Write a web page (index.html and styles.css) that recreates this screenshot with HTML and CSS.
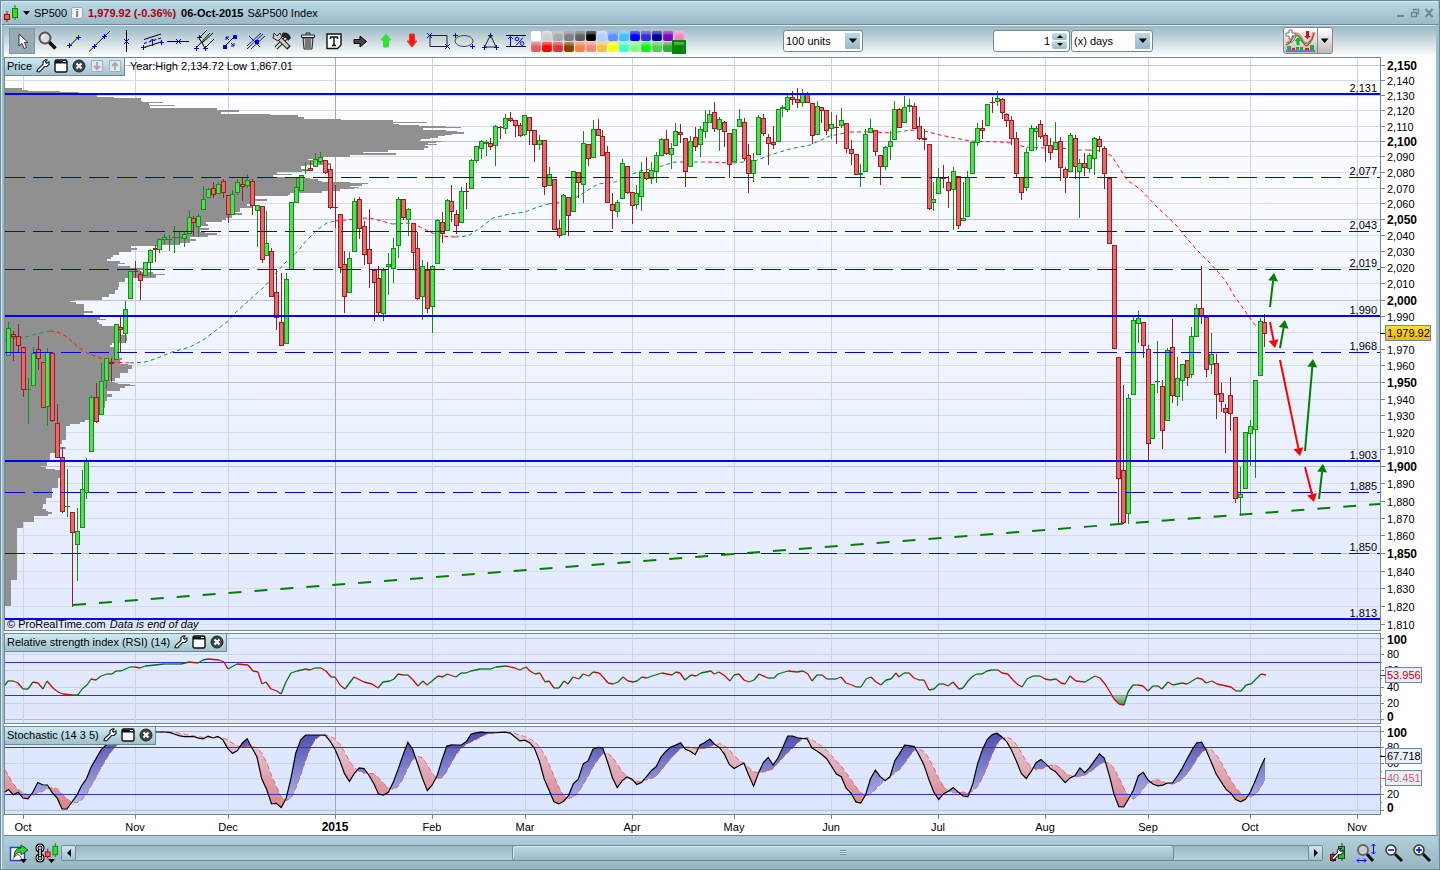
FILE: index.html
```html
<!DOCTYPE html>
<html lang="en">
<head>
<meta charset="UTF-8">
<meta name="viewport" content="width=device-width, initial-scale=1.0">
<title>SP500</title>
<link rel="stylesheet" href="styles.css">
</head>
<body>

<!-- shared icons -->
<svg class="defs" width="0" height="0" aria-hidden="true">
    <defs>
        <symbol id="plus" viewBox="0 0 5 5"><path d="M2.5 0v5M0 2.5h5" stroke="#00f" fill="none"/></symbol>
        <symbol id="cross" viewBox="0 0 5 5"><path d="M0 0l5 5M5 0L0 5" stroke="#00f" fill="none"/></symbol>
        <symbol id="wrench" viewBox="0 0 14 14">
            <path d="M1 12.5L1.5 10.5L7 5.500L7 2.500L9.500 0.800L11 1L9.500 3L10.500 4.200L13 3L13 5.500L11 7.500L8.500 7.500L3.500 12.800Z" fill="#fff" stroke="#222" stroke-width="1.200"/>
        </symbol>
        <symbol id="window" viewBox="0 0 14 14">
            <rect x="1" y="1" width="12" height="12" rx="1.500" fill="#fff" stroke="#111" stroke-width="1.400"/>
            <path d="M1 1.500h12v3H1z" fill="#111"/><path d="M9 2.500h3" stroke="#fff"/>
        </symbol>
        <symbol id="close" viewBox="0 0 14 14">
            <circle cx="7" cy="7" r="6" fill="#444" stroke="#222"/>
            <path d="M4.500 4.500l5 5M9.500 4.500l-5 5" stroke="#fff" stroke-width="2"/>
        </symbol>
        <symbol id="lens" viewBox="0 0 20 20">
            <path d="M11 11l7 7" stroke="#111" stroke-width="3"/>
            <circle cx="7" cy="7" r="5" fill="#eef6fa" stroke="#333" stroke-width="1.500"/>
        </symbol>
        <symbol id="candles" viewBox="0 0 16 18">
            <path d="M4 7v11" stroke="#a00"/><rect x="1.500" y="10.500" width="5" height="5" fill="#f06060" stroke="#a00"/>
            <path d="M12 1v15" stroke="#080"/><rect x="9.500" y="4.500" width="5" height="9" fill="#3d3" stroke="#080"/>
        </symbol>
    </defs>
</svg>

<div class="window">

    <!-- TITLE BAR -->
    <header class="titlebar">
        <svg width="16" height="18"><use href="#candles"/></svg>
        <button class="caret" aria-label="Instrument list"></button>
        <span class="symbol">SP500</span>
        <button class="info" aria-label="Information">i</button>
        <strong class="quote">1,979.92 (-0.36%)</strong>
        <strong class="date">06-Oct-2015</strong>
        <span class="name">S&amp;P500 Index</span>
        <div class="controls">
            <button aria-label="Minimize"><svg width="10" height="10"><path d="M1 8h7" stroke="#6b8594" stroke-width="2"/></svg></button>
            <button aria-label="Restore"><svg width="10" height="10"><path d="M3.500 3V1.500h5v4H7M1.500 4.500h5v4h-5z" fill="none" stroke="#6b8594" stroke-width="1.300"/></svg></button>
            <button aria-label="Close"><svg width="10" height="10"><path d="M1.500 1l7 8M8.500 1l-7 8" stroke="#6b8594" stroke-width="2"/></svg></button>
        </div>
    </header>

    <!-- TOOLBAR -->
    <div class="toolbar">
        <div class="tools">
            <button class="tool active" aria-label="Pointer"><svg viewBox="0 0 26 25"><path d="M10 6v12l3-2.500l2 5l2.500-1l-2-5h3.500z" fill="#fff" stroke="#333"/></svg></button>
            <button class="tool" aria-label="Zoom"><svg viewBox="0 0 26 25"><path d="M14 14l6.500 6.500" stroke="#111" stroke-width="3.500"/><circle cx="10" cy="10" r="5.500" fill="#ddd" stroke="#555" stroke-width="2"/><path d="M7 10q0-3 3-3" fill="none" stroke="#fff"/></svg></button>
            <button class="tool" aria-label="Segment"><svg viewBox="0 0 26 25"><path d="M9 17.500l8-8" stroke="#000"/><use href="#plus" x="6" y="15" width="5" height="5"/><use href="#plus" x="15" y="7" width="5" height="5"/></svg></button>
            <button class="tool" aria-label="Line"><svg viewBox="0 0 26 25"><path d="M2 23.500L23 3" stroke="#000"/><use href="#plus" x="5" y="16" width="5" height="5"/><use href="#plus" x="15" y="6" width="5" height="5"/></svg></button>
            <button class="tool" aria-label="Vertical line"><svg viewBox="0 0 26 25"><path d="M13.500 2v22" stroke="#000"/><use href="#cross" x="11" y="11" width="5" height="5"/></svg></button>
            <button class="tool" aria-label="Channel"><svg viewBox="0 0 26 25"><path d="M5 11.500L22 6M5 19.500L22 14" stroke="#000"/><path d="M5 15.500L22 10" stroke="#000" stroke-dasharray="3 2"/><path d="M13.500 18v-7M11.500 13l2-2l2 2" fill="none" stroke="#00f"/><use href="#plus" x="2" y="17" width="5" height="5"/><use href="#plus" x="20" y="12" width="5" height="5"/></svg></button>
            <button class="tool" aria-label="Horizontal line"><svg viewBox="0 0 26 25"><path d="M2 13.500h22" stroke="#000"/><use href="#cross" x="11" y="11" width="5" height="5"/></svg></button>
            <button class="tool" aria-label="Pitchfork"><svg viewBox="0 0 26 25"><path d="M8 10l8-8M5 20L19 5M14 20l9-9M8 10l6 10M11 15L22 5" fill="none" stroke="#000"/><use href="#plus" x="6" y="7" width="5" height="5"/><use href="#plus" x="3" y="18" width="5" height="5"/><use href="#plus" x="12" y="18" width="5" height="5"/></svg></button>
            <button class="tool" aria-label="Duplicate segment"><svg viewBox="0 0 26 25"><path d="M8 18l10-10" stroke="#000"/><path d="M6 17h4v4h-4zM16 7h4v4h-4z" fill="#00f"/><path d="M9 9l3 3M9 12V9h3M17 18l-3-3M17 15v3h-3" fill="none" stroke="#00f"/></svg></button>
            <button class="tool" aria-label="Parallel line"><svg viewBox="0 0 26 25"><path d="M4 18L18 5M8 21L22 8" stroke="#222"/><path d="M6 8l11 11M4 21L20 6" stroke="#00f"/><path d="M12 12h4v4h-4z" fill="#00f"/></svg></button>
            <button class="tool" aria-label="Object tools"><svg viewBox="0 0 26 25"><path d="M7 20L20 7" stroke="#222" stroke-width="4"/><path d="M7 20L18 9" stroke="#ddd" stroke-width="2"/><path d="M10 10l10 10" stroke="#222" stroke-width="5"/><path d="M10 10l9 9" stroke="#ccc" stroke-width="3"/><path d="M13 5q6-2 9 5l-3 3q-1-4-6-4z" fill="#222"/><path d="M5 5l3 3l3-3l2 4l-4 4l-5-3z" fill="#ccc" stroke="#222"/></svg></button>
            <button class="tool" aria-label="Delete"><svg viewBox="0 0 26 25"><path d="M8 10l1 11h8l1-11z" fill="#ccc" stroke="#222"/><path d="M6.500 7h13v2.500h-13z" fill="#eee" stroke="#222"/><path d="M11 6.500v-1.500h4v1.500M11 11v9M13 11v9M15 11v9" fill="none" stroke="#222"/></svg></button>
            <button class="tool" aria-label="Text"><svg viewBox="0 0 26 25"><path d="M6 6h14v11l-3.500 3.500H6z" fill="#fff" stroke="#111" stroke-width="1.400"/><path d="M9.500 11V9h7v2M13 9v8.500M11 17.500h4" fill="none" stroke="#111" stroke-width="1.500"/></svg></button>
            <button class="tool" aria-label="Arrow right"><svg viewBox="0 0 26 25"><path d="M7 11.500h6V8l6.500 5.500L13 19v-3.500H7z" fill="#444" stroke="#000"/></svg></button>
            <button class="tool" aria-label="Arrow up"><svg viewBox="0 0 26 25"><path d="M13 6l5 6h-2.500v7h-5v-7H8z" fill="#2e2" stroke="#5c5"/></svg></button>
            <button class="tool" aria-label="Arrow down"><svg viewBox="0 0 26 25"><path d="M13 19l5-6h-2.500V6h-5v7H8z" fill="#f11" stroke="#e33"/></svg></button>
            <button class="tool" aria-label="Rectangle"><svg viewBox="0 0 26 25"><path d="M5 7.500h17v11H5z" fill="none" stroke="#222"/><use href="#cross" x="2" y="5" width="5" height="5"/><use href="#cross" x="20" y="16" width="5" height="5"/></svg></button>
            <button class="tool" aria-label="Ellipse"><svg viewBox="0 0 26 25"><ellipse cx="13" cy="13" rx="9" ry="5.500" fill="none" stroke="#444"/><use href="#plus" x="2" y="5" width="5" height="5"/><use href="#plus" x="19" y="16" width="5" height="5"/></svg></button>
            <button class="tool" aria-label="Triangle"><svg viewBox="0 0 26 25"><path d="M13.500 7L19 19H7.500z" fill="none" stroke="#222"/><use href="#plus" x="11" y="5" width="5" height="5"/><use href="#plus" x="5" y="17" width="5" height="5"/><use href="#plus" x="17" y="17" width="5" height="5"/></svg></button>
            <button class="tool" aria-label="Percent"><svg viewBox="0 0 26 25"><path d="M3 7.500h20M3 18.500h20" stroke="#000"/><path d="M7.500 18V9M5 11l2.500-2.500L10 11M13 17.500l7-8" fill="none" stroke="#00f"/><circle cx="14" cy="11" r="1.800" fill="none" stroke="#00f"/><circle cx="19" cy="15.500" r="1.800" fill="none" stroke="#00f"/></svg></button>
        </div>

        <div class="palette" id="palette"></div>

        <div class="drop units">
            <select aria-label="Units"><option>100 units</option></select>
        </div>

        <div class="period">
            <div class="spin">
                <input type="number" value="1" aria-label="Number of days">
                <div class="steps">
                    <button aria-label="Increase"><svg width="6" height="3"><path d="M0 3h6L3 0z"/></svg></button>
                    <button aria-label="Decrease"><svg width="6" height="3"><path d="M0 0h6L3 3z"/></svg></button>
                </div>
            </div>
            <div class="drop days">
                <select aria-label="Period"><option>(x) days</option></select>
            </div>
        </div>

        <div class="indicators">
            <button class="add" aria-label="Add indicator"><svg width="33" height="25" viewBox="0 0 33 25">
                <path d="M2 16q4-1 6-6t5-4q3 1 6 7t5 3q4-3 6-12" fill="none" stroke="#d99" stroke-width="3"/>
                <path d="M2 17q4-1 6-6t5-4q3 1 6 7t5 3q4-3 6-12" fill="none" stroke="#c22"/>
                <path d="M3 14q6 3 9-6q4-2 6 6q5 4 11-4" fill="none" stroke="#2a2"/>
                <path d="M5 2h3v3h3v3H8v3H5V8H2V5h3z" fill="#fff" stroke="#777"/>
                <path d="M12.500 17v-4h-2l3.500-4l3.500 4h-2v4z" fill="#0b2"/>
                <path d="M22 3h3v5h2l-3.500 3L20 8h2z" fill="#d11"/>
                <path d="M3 18h4v4H3zM12 19h3v3h-3zM16 19h3v3h-3zM26 17h4v5h-4z" fill="#1b2"/>
                <path d="M8 20h3v2H8zM21 20h4v2h-4z" fill="#d22"/><path d="M2 23h29" stroke="#22c"/>
            </svg></button>
            <button class="more" aria-label="Indicator list"></button>
        </div>
    </div>

    <!-- CHARTS -->
    <main class="charts">
        <section class="panel">
            <div class="tag">
                <span>Price</span>
                <button aria-label="Settings"><svg width="14" height="14"><use href="#wrench"/></svg></button>
                <button aria-label="Maximize"><svg width="14" height="14"><use href="#window"/></svg></button>
                <button aria-label="Close"><svg width="14" height="14"><use href="#close"/></svg></button>
                <button aria-label="Move down"><svg width="14" height="14"><path d="M1.500 1.500h11v11h-11z" fill="#e0e8ea" stroke="#aab"/><path d="M7 3v6M4 7l3 3l3-3" fill="none" stroke="#aaa" stroke-width="2"/></svg></button>
                <button aria-label="Move up"><svg width="14" height="14"><path d="M1.500 1.500h11v11h-11z" fill="#e0e8ea" stroke="#aab"/><path d="M7 11V5M4 7l3-3l3 3" fill="none" stroke="#aaa" stroke-width="2"/></svg></button>
            </div>
            <p class="range">Year:High 2,134.72 Low 1,867.01</p>
            <p class="credit">© ProRealTime.com <em>Data is end of day</em></p>
            <svg id="price" class="plot price" role="img" aria-label="SP500 price"></svg>
        </section>

        <section class="panel">
            <div class="tag">
                <span>Relative strength index (RSI) (14)</span>
                <button aria-label="Settings"><svg width="14" height="14"><use href="#wrench"/></svg></button>
                <button aria-label="Maximize"><svg width="14" height="14"><use href="#window"/></svg></button>
                <button aria-label="Close"><svg width="14" height="14"><use href="#close"/></svg></button>
            </div>
            <svg id="rsi" class="plot rsi" role="img" aria-label="RSI"></svg>
        </section>

        <section class="panel">
            <div class="tag">
                <span>Stochastic (14 3 5)</span>
                <button aria-label="Settings"><svg width="14" height="14"><use href="#wrench"/></svg></button>
                <button aria-label="Maximize"><svg width="14" height="14"><use href="#window"/></svg></button>
                <button aria-label="Close"><svg width="14" height="14"><use href="#close"/></svg></button>
            </div>
            <svg id="stoch" class="plot stoch" role="img" aria-label="Stochastic"></svg>
        </section>
        <svg id="dates" class="plot dates" role="img" aria-label="Dates"></svg>
    </main>

    <!-- BOTTOM BAR -->
    <footer class="bottombar">
        <button class="ico" aria-label="Export"><svg width="20" height="20" viewBox="0 0 20 20"><path d="M1.500 4.500h14v13h-14z" fill="#fff" stroke="#24c" stroke-width="1.500"/><path d="M4 16q5-9 9 0" fill="none" stroke="#d22"/><path d="M5 14q0-9 7-9V2l7 5l-7 5V9q-5 0-7 5z" fill="#3c4" stroke="#060"/><path d="M11 16h7l-3.500 4z"/></svg></button>
        <button class="ico wide" aria-label="Link charts"><svg width="26" height="20" viewBox="0 0 26 20"><path d="M6 2q-3 0-3 3q0 3 3 3q3 0 3-3q0-3-3-3zM6 12q-3 0-3 3q0 3 3 3q3 0 3-3q0-3-3-3z" fill="none" stroke="#000" stroke-width="3"/><path d="M6 2q-3 0-3 3q0 3 3 3q3 0 3-3q0-3-3-3zM6 12q-3 0-3 3q0 3 3 3q3 0 3-3q0-3-3-3zM6 7v6" fill="none" stroke="#fff"/><path d="M4.500 6v8M7.500 6v8" stroke="#000"/><use href="#candles" x="10" y="-1" width="15" height="17"/><path d="M14 16h7l-3.500 4z"/></svg></button>
        <button class="end" aria-label="Scroll left"><svg width="4" height="8"><path d="M4 0v8L0 4z"/></svg></button>
        <div class="track"><div class="thumb"><i></i></div></div>
        <button class="end" aria-label="Scroll right"><svg width="4" height="8"><path d="M0 0v8l4-4z"/></svg></button>
        <button class="ico first" aria-label="Chart settings"><svg width="20" height="20" viewBox="0 0 20 20"><path d="M14 0v18" stroke="#333"/><rect x="10.500" y="3.500" width="6" height="12" fill="#2b4" stroke="#050"/><path d="M5 9v10" stroke="#333"/><rect x="2.500" y="11.500" width="5" height="6" fill="#d33" stroke="#600"/><use href="#wrench" x="3" y="4" width="13" height="14"/></svg></button>
        <button class="ico zoom" aria-label="Zoom fit"><svg width="20" height="20" viewBox="0 0 20 20"><path d="M10 10l7 8" stroke="#111" stroke-width="3"/><circle cx="7" cy="7" r="5" fill="#ccc" stroke="#666" stroke-width="2"/><path d="M17.500 1v10M15.500 3l2-2l2 2M15.500 9l2 2l2-2M1 17.500h9M3 15.500l-2 2l2 2M8 15.500l2 2l-2 2" fill="none" stroke="#00f"/></svg></button>
        <button class="ico zoom" aria-label="Zoom out"><svg width="20" height="20"><use href="#lens"/><path d="M4 7h6" stroke="#00f" stroke-width="1.500"/></svg></button>
        <button class="ico zoom" aria-label="Zoom in"><svg width="20" height="20"><use href="#lens"/><path d="M4 7h6M7 4v6" stroke="#00f" stroke-width="1.500"/></svg></button>
    </footer>
</div>

<script src="chart.js"></script>
</body>
</html>
```

FILE: styles.css
```css
:root {
    --line: #6f8995;
    --light: #bad9e7;
    --mid: #9dbbc8;
}
* { box-sizing: border-box; }
body {
    margin: 0;
    font-family: "Liberation Sans", Arial, sans-serif;
    font-size: 11px;
    color: #000;
    background: var(--mid);
}
button {
    padding: 0;
    border: none;
    background: none;
    font: inherit;
    color: inherit;
}
p { margin: 0; }
svg { display: block; }
.defs { position: absolute; }
.window {
    min-height: 100vh;
    display: flex;
    flex-direction: column;
    padding: 0 3px;
    border: 1px solid var(--line);
    background: linear-gradient(to right, #d8edf5 1px, var(--mid) 1px);
}

/* title bar */
.titlebar {
    height: 24px;
    margin: 0 -2px;
    padding: 0 4px 0 1px;
    display: flex;
    align-items: center;
    border-top: 1px solid #d4eaf4;
    border-bottom: 1px solid var(--line);
    background: linear-gradient(var(--light), #9bb9c6);
}
.caret {
    width: 7px;
    height: 4px;
    margin: 0 4px;
    background: #000;
    clip-path: polygon(0 0, 100% 0, 50% 100%);
}
.symbol { width: 37px; }
.info {
    width: 12px;
    height: 12px;
    margin-right: 5px;
    border: 1px solid #9ab;
    border-radius: 2px;
    background: #f4f4f4;
    line-height: 10px;
    font-weight: bold;
    color: #667;
}
.quote { color: #a80010; margin-right: 5px; }
.date { margin-right: 4px; }
.controls {
    margin-left: auto;
    display: flex;
    gap: 4px;
}

/* toolbar */
.toolbar {
    height: 32px;
    padding: 0 5px 2px;
    display: flex;
    align-items: center;
    border-top: 1px solid #d4eaf4;
    background: linear-gradient(#9bb7c4, #fff);
}
.tools { display: flex; }
.tool { width: 26px; height: 26px; }
.tool.active {
    background: #96abb5;
    box-shadow: inset 0 0 0 1px #8096a1;
}
.palette {
    margin-left: 2px;
    padding-top: 2px;
    display: grid;
    grid-template-columns: repeat(14, 10px);
    gap: 1px;
}
.palette button {
    height: 10px;
    border-radius: 2px;
    box-shadow: inset 0 3px 2px rgba(255,255,255,0.35);
}
.palette .picked { outline: 2px solid #080; border-radius: 0; }
.drop { position: relative; }
.drop::after {
    content: "";
    position: absolute;
    top: 3px;
    right: 3px;
    width: 15px;
    height: 16px;
    background: #000;
    clip-path: polygon(25% 37%, 80% 37%, 52% 65%);
    pointer-events: none;
}
.drop select {
    width: 100%;
    height: 22px;
    padding: 0 2px;
    appearance: none;
    border: 1px solid var(--line);
    border-radius: 3px;
    font: inherit;
    color: #000;
    background: linear-gradient(var(--light), #9bb9c6) right 2px center / 15px 16px no-repeat #fff;
}
.units { width: 80px; margin-left: 99px; }
.period {
    margin-left: 130px;
    display: flex;
    gap: 1px;
}
.spin {
    width: 77px;
    height: 22px;
    padding: 2px;
    display: flex;
    border: 1px solid var(--line);
    border-radius: 3px;
    background: #fff;
}
.spin input {
    width: 100%;
    min-width: 0;
    padding: 0 2px;
    border: none;
    text-align: right;
    font: inherit;
    appearance: textfield;
}
.spin input::-webkit-inner-spin-button { display: none; }
.steps {
    width: 15px;
    flex: none;
    display: grid;
    gap: 1px;
}
.steps button {
    display: grid;
    place-items: center;
    border-radius: 2px;
    background: linear-gradient(#c4dfea, #9bb9c6);
}
.days { width: 82px; }
.indicators {
    margin-left: 130px;
    display: flex;
    border: 1px solid #888;
    border-radius: 3px;
    background: linear-gradient(#fff, #bbb);
}
.add { border-right: 1px solid #888; }
.more {
    width: 14px;
    background: #000;
    clip-path: polygon(20% 42%, 75% 42%, 47% 60%);
}

/* charts */
.charts {
    display: flex;
    flex-direction: column;
    gap: 2px;
    background: #fff;
}
.panel { position: relative; }
.plot { width: 100%; }
.plot text { font-size: 11px; }
.plot .bold { font-size: 12px; font-weight: bold; }
.price { height: 574px; }
.rsi { height: 91px; }
.stoch { height: 89px; }
.dates { height: 20px; margin-top: -2px; }
.tag {
    position: absolute;
    top: 1px;
    left: 1px;
    height: 18px;
    padding: 0 2px 2px;
    display: flex;
    align-items: center;
    gap: 4px;
    border-right: 1px solid var(--line);
    border-bottom: 1px solid var(--line);
    background: linear-gradient(#cdebf4, #a2c1cd);
}
.range {
    position: absolute;
    top: 3px;
    left: 126px;
}
.credit {
    position: absolute;
    bottom: 1px;
    left: 3px;
    line-height: 12px;
}
.credit em { margin-left: 1px; }
.crisp { shape-rendering: crispEdges; }

/* bottom bar */
.bottombar {
    flex: 1;
    min-height: 34px;
    margin-right: -2px;
    padding: 0 6px 0 5px;
    display: flex;
    align-items: center;
    border-top: 1px solid var(--line);
    background: linear-gradient(#b2d0dc, #98b6c2);
}
.ico { width: 20px; height: 20px; }
.ico.wide { width: 26px; margin: 0 1px 0 5px; }
.ico.first { margin-left: 5px; }
.ico.zoom { margin-left: 8px; }
.end {
    width: 15px;
    height: 16px;
    display: grid;
    place-items: center;
    border: 1px solid var(--line);
    border-radius: 2px;
    background: linear-gradient(#d0e6ef, #a5c3cf);
}
.track {
    flex: 1;
    height: 16px;
    border-top: 1px solid var(--line);
    border-bottom: 1px solid var(--line);
    background: linear-gradient(#98b6c3, #b5d3df);
}
.thumb {
    width: 53.7%;
    height: 16px;
    margin: -1px 0 0 35.4%;
    display: grid;
    place-items: center;
    border: 1px solid var(--line);
    border-radius: 3px;
    background: linear-gradient(#bad9e5, #9bb9c6);
    box-shadow: inset 1px 1px 0 #d8edf5;
}
.thumb i {
    width: 6px;
    height: 5px;
    background: repeating-linear-gradient(#6f8995 0 1px, #d8edf5 1px 2px);
}
```

FILE: chart.js
```javascript
// === PALETTE ===
const colors = [
    '#ffffff', '#d0d0d0', '#a8a8a8', '#808080', '#606060', '#000000', '#b8c8ff', '#6090ff', '#40c0ff', '#0000ff', '#3030d8', '#0000a0', '#8000c0', '#ff80c0',
    '#e06060', '#ff0000', '#e83030', '#884000', '#ff8040', '#ff8870', '#ffc040', '#ffff00', '#40ffc0', '#80ff80', '#00ff00', '#50d050', '#30b030', '#008000'
];
const palette = document.getElementById('palette');
colors.forEach((c, i) => {
    const b = document.createElement('button');
    b.style.background = c;
    b.setAttribute('aria-label', 'Colour ' + c);
    if (i === colors.length - 1) b.className = 'picked';
    palette.appendChild(b);
});

// === DATA ===
// colour, body top, body bottom, high, low
const candles = `
g328,355,322,355 r334,336,331,360 r336,345,324,352 r347,389,347,396 g389,389,378,423 g353,385,347,385 r349,358,336,369 r362,407,362,407
g352,406,348,425 r353,420,353,421 r423,457,404,457 r457,511,447,512 g506,506,469,516 r512,532,512,606 g531,544,508,580 g489,527,470,527
g461,492,458,498 g397,451,395,451 r397,421,383,422 g381,414,363,414 g358,380,358,388 r362,363,358,381 g324,359,324,359 r327,329,315,352
g309,333,301,342 g271,298,271,298 r271,271,261,277 r274,280,271,299 g262,275,262,275 g250,262,249,275 r248,249,245,261 g239,249,238,252
g237,239,234,243 g239,239,235,250 g237,237,226,252 g237,237,232,243 g234,238,232,246 g217,233,210,233 r218,222,216,235 g216,226,214,236
g199,209,186,209 g189,197,188,197 r188,194,182,197 g184,193,182,193 r181,192,179,197 r195,214,195,222 g194,214,190,214 g182,192,179,194
r184,186,178,200 g180,185,174,187 r181,205,179,214 g205,210,205,246 r206,259,206,262 g243,255,211,255 r251,296,248,296 r292,317,269,329
r322,345,273,345 g279,343,273,343 g202,269,202,269 g187,202,177,202 g175,190,175,190 g170,170,162,173 r168,170,161,170 g159,166,153,166
g157,161,152,163 r160,172,160,173 r169,207,165,208 r207,207,185,227 r214,267,214,272 r264,296,251,312 g258,292,252,292 g201,251,198,251
r199,228,197,238 r226,254,221,264 r249,263,209,287 r270,282,270,320 r278,312,266,315 g270,313,268,320 g264,266,253,294 g248,268,238,282
g199,245,197,257 r199,217,199,219 g209,219,208,235 r223,252,223,269 r248,298,232,299 g266,296,260,319 r270,308,262,312 g266,306,265,332
g220,263,219,263 r222,233,212,242 g200,230,199,230 r201,211,185,221 r214,225,210,233 g191,222,187,222 r191,191,183,208 g160,188,159,188
g146,160,146,162 g141,148,140,158 g142,143,140,155 r143,146,138,149 g126,145,125,165 r127,127,126,138 g118,128,114,133 r118,120,112,121
r120,125,120,136 r125,135,123,136 g115,134,115,135 r117,130,117,144 r130,144,130,161 g140,144,135,149 r140,186,140,194 g174,185,167,185
r179,229,179,229 r228,235,220,237 g195,234,194,234 r197,215,197,235 g171,211,171,211 r172,182,172,197 g143,184,131,202 r144,158,144,165
g129,157,120,157 r129,135,119,135 r136,155,130,155 r152,202,146,202 r204,210,193,228 g202,211,200,216 g163,198,159,198 r166,192,166,193
r192,205,192,223 g193,204,185,208 g172,196,162,210 r172,178,157,179 g170,178,162,183 g155,171,152,182 g139,155,138,155 r139,153,130,154
g148,154,143,168 g131,145,123,145 r132,134,124,142 r138,171,138,186 g141,166,136,166 r137,146,127,150 g129,144,126,156 g122,131,110,137
g114,122,110,122 r112,128,102,131 g119,129,117,150 r122,131,121,146 r133,164,133,177 g129,161,129,161 g119,126,109,126 r122,158,118,160
r155,173,144,192 g160,173,153,181 g117,154,115,154 r118,133,114,135 r137,143,134,164 r142,144,126,148 g109,141,109,141 g107,108,105,116
g97,109,94,111 r97,99,91,104 r99,102,88,107 g93,102,89,106 r94,102,92,102 r103,135,103,143 g106,134,101,134 r107,110,107,122
r110,130,110,134 g124,128,112,138 r127,127,115,143 g120,125,108,127 r123,148,123,152 r149,153,140,164 r154,174,154,174 g173,174,164,186
g134,171,129,171 g128,132,119,132 r130,151,130,155 r155,166,155,184 g147,166,146,169 g141,146,131,159 g109,139,101,139 r109,127,108,127
g107,122,96,122 g105,106,99,111 r106,128,103,128 r126,138,117,139 r138,139,129,149 r144,208,144,209 g199,202,182,210 g177,193,168,193
r177,178,165,187 r182,190,176,207 g171,189,167,229 r176,225,176,228 g218,220,182,220 g177,216,171,216 g142,173,142,173 g128,142,123,145
r128,130,120,138 g104,125,104,125 r102,102,97,112 g98,101,91,105 r99,112,98,118 r114,120,113,126 r120,138,116,144 r138,173,132,176
r177,192,177,199 g152,187,148,190 g128,150,125,150 g128,131,126,149 r124,136,120,138 r135,145,133,161 r145,152,138,159 g142,149,122,149
r141,167,137,180 r169,177,167,192 g135,171,133,171 r138,166,135,178 g163,171,159,217 r163,167,153,175 g155,168,153,172 g138,158,137,174
r139,146,136,151 r148,173,146,188 r178,243,178,243 r245,348,245,348 r357,478,357,524 r470,522,385,523 g398,513,394,523 g320,394,316,394
g318,323,311,342 r322,345,322,357 r349,443,345,460 g384,438,384,438 g381,381,341,392 r386,430,380,448 g350,420,348,420 r347,395,319,402
g378,396,357,405 g364,380,364,400 r360,377,360,385 g336,374,327,377 g308,336,304,336 r308,316,266,323 r317,369,317,376 g354,364,333,373
r363,394,354,418 r393,401,383,411 r408,412,404,452 r395,413,377,430 r417,498,417,502 g494,497,467,515 g432,488,432,488 g426,433,420,465
g380,429,380,477 g321,375,318,375 r322,333,314,346
`.trim().split(/\s+/).map(t => ({ up: t[0] === 'g', v: t.slice(1).split(',').map(Number) }));

const pairs = s => s.trim().split(/\s+/).map(p => p.split(',').map(Number));

// volume profile: y, right edge
const profile = pairs(`88,22 90,28 91,60 92,79 94,97 97,114 98,141 101,142 102,163 103,149 105,175 106,150 108,217 110,239 112,221 114,270
115,298 117,304 119,341 120,393 122,427 123,393 124,399 125,419 126,446 127,461 128,423 130,446 131,457 132,464 134,452 135,445 136,438
138,430 139,421 140,420 141,442 142,436 143,428 144,437 145,425 146,428 148,424 150,388 152,363 153,396 155,350 157,320 159,308 160,326
163,331 165,307 166,301 169,310 171,302 172,277 174,292 175,273 177,290 178,310 179,318 181,322 182,350 183,368 184,362 186,350 187,359
188,354 189,340 191,322 193,290 195,288 196,255 199,267 201,255 204,247 206,252 208,240 212,235 213,242 215,232 218,226 220,222 222,206
224,208 226,200 228,209 230,200 232,205 233,217 235,208 237,190 239,196 241,190 243,180 245,160 246,131 248,137 250,131 252,119 255,113
257,111 259,107 261,120 263,125 264,118 266,130 268,146 270,140 272,153 274,165 275,156 278,125 282,119 287,118 290,115 294,109 297,102
300,75 301,70 302,76 304,84 311,93 313,84 315,95 317,100 319,106 320,97 322,99 324,102 326,120 335,127 341,125 343,112 345,110 347,117
350,115 355,116 358,122 360,120 364,128 365,132 369,128 373,120 378,115 381,110 382,115 383,118 384,130 385,135 386,125 388,120 391,107
394,112 397,107 401,105 408,102 411,104 415,90 417,90 420,85 422,80 424,70 426,66 438,66 440,62 444,60 447,66 449,60 453,50 462,47 466,41
467,46 469,55 470,60 478,58 488,52 498,46 504,43 508,42 509,46 511,48 512,52 514,48 516,34 522,23 528,17 580,11 606,5`);

// moving average, cut where it changes direction
const average = [
    ['g', '5,340 12,338 20,338 30,336 40,333 50,331'],
    ['r', '50,331 58,332 67,337 78,347 87,353 95,356 103,359 112,362 130,363'],
    ['g', '130,363 145,362 155,359 172,352 190,347 203,340 215,331 228,321 234,314 245,304 256,294 265,286 275,274 285,263 297,252 306,241 318,229 327,223 335,221'],
    ['r', '335,221 348,220 360,218 370,218 385,222 392,224'],
    ['g', '392,224 412,223'],
    ['r', '412,223 430,232 440,236 455,237'],
    ['g', '455,237 468,236 480,228 493,218 510,214 525,212 535,208 548,204'],
    ['r', '548,204 562,202'],
    ['g', '562,202 575,198 585,192 598,184 615,182 630,175 640,171 655,168 675,162 680,162'],
    ['r', '680,162 694,162'],
    ['g', '694,162 708,162'],
    ['r', '708,162 733,163'],
    ['g', '733,163 755,161 770,155 790,149 810,145 830,136 850,132'],
    ['r', '850,132 875,132 890,133'],
    ['g', '890,133 905,131 910,130'],
    ['r', '910,130 925,131 940,135 955,138 970,141 1000,142 1012,143 1025,147 1045,148 1060,148 1078,150'],
    ['g', '1078,150 1088,150'],
    ['r', '1088,150 1103,151 1112,156 1127,180 1140,189 1155,205 1175,224 1195,248 1210,263 1225,280 1235,297 1245,311 1255,325 1262,330']
];

const levels = [
    [2131, 94, 1], [2077, 177, 0], [2043, 231, 0], [2019, 269, 0], [1990, 316, 1],
    [1968, 352, 0], [1903, 461, 1], [1885, 492, 0], [1850, 553, 0], [1813, 619, 1]
];

const arrows = [
    [1270, 307, 1274, 273, 'green'], [1270, 322, 1275, 348, 'red'], [1280, 348, 1285, 320, 'green'],
    [1280, 360, 1300, 456, 'red'], [1305, 451, 1313, 359, 'green'],
    [1305, 467, 1314, 502, 'red'], [1319, 499, 1323, 464, 'green']
];

const months = [
    ['Oct', 23], ['Nov', 135], ['Dec', 228], ['2015', 335], ['Feb', 432], ['Mar', 525], ['Apr', 632],
    ['May', 734], ['Jun', 831], ['Jul', 938], ['Aug', 1045], ['Sep', 1148], ['Oct', 1250], ['Nov', 1357]
];

const rsi = pairs(`5,685 8,681 13,681 18,683 23,689 28,689 33,682 38,683 43,689 47,681 53,688 58,692 63,694 72,695 78,695 82,689 87,685 91,679
96,680 101,676 107,674 112,674 116,671 121,671 130,667 135,667 140,668 145,666 155,665 164,664 181,664 189,662 198,663 203,660 208,659 219,660
224,662 228,669 237,664 248,665 253,671 258,672 262,684 266,682 271,689 277,691 281,694 286,682 291,673 297,671 306,669 310,670 315,668 321,668
326,671 331,677 335,677 340,685 345,689 354,677 364,682 372,684 378,688 383,682 390,681 394,679 398,674 403,675 408,675 413,680 418,686 423,681
427,685 432,681 438,676 443,677 447,674 456,677 461,673 466,673 471,671 480,669 491,669 496,667 506,666 515,668 520,670 526,667 530,671 535,674
540,673 545,682 549,681 554,688 559,688 564,681 568,684 573,677 579,679 583,674 589,676 593,672 599,673 603,677 608,683 613,684 618,682 623,677
628,681 633,682 637,681 642,677 647,678 652,676 662,673 672,675 676,672 680,673 685,680 691,675 696,676 701,673 711,671 714,674 719,672 725,676
730,681 734,675 739,674 744,680 749,682 754,680 759,674 768,678 774,678 778,674 788,671 797,672 803,671 808,674 812,681 817,675 822,675 827,679
836,679 841,677 846,683 852,685 856,687 861,687 866,679 871,677 876,682 881,685 886,680 891,679 896,673 899,677 904,673 909,673 914,678 919,680
924,680 929,690 934,689 939,684 944,684 948,686 953,682 959,689 963,688 968,681 973,676 977,674 982,674 987,671 992,670 998,670 1002,673 1008,674
1012,679 1017,684 1022,687 1027,679 1033,676 1040,676 1045,679 1050,680 1056,679 1061,683 1065,684 1070,676 1076,681 1085,682 1090,679 1095,676
1100,678 1105,684 1110,692 1114,699 1119,704 1124,705 1128,692 1133,685 1138,685 1143,686 1148,691 1153,686 1158,686 1162,689 1168,682 1173,685
1182,683 1187,684 1192,681 1197,678 1202,679 1206,683 1212,681 1217,684 1231,687 1236,691 1241,691 1246,685 1251,684 1256,679 1261,674 1266,675`);

const stochK = pairs(`-15,745 -10,755 -5,768 0,785 5,792 8,789 13,795 18,792 23,798 29,799 33,792 38,782 43,785 48,785 53,794 58,799 62,809 67,809
72,802 77,795 82,785 87,778 92,765 97,757 101,750 106,745 112,740 120,736 140,732 168,732 180,736 187,737 192,736 198,738 203,739 208,736 213,738
219,736 223,740 228,749 233,754 238,750 243,742 248,738 252,748 257,757 262,780 267,790 271,804 276,803 281,808 286,799 291,778 296,752 301,739
305,735 325,735 330,741 335,749 340,761 345,775 349,782 354,774 360,767 365,769 370,777 374,784 379,795 384,795 389,792 393,783 399,767 404,752
408,742 413,750 418,765 423,780 427,791 433,784 438,774 443,756 448,743 452,745 462,745 467,741 471,734 480,732 492,733 505,732 510,733 520,741
526,740 530,743 535,749 540,763 545,782 550,792 554,802 559,804 564,801 568,797 573,784 578,780 583,764 588,761 593,749 602,746 607,760 612,777
618,789 622,781 627,777 632,779 638,786 643,781 651,771 656,767 661,757 667,750 671,747 676,745 680,742 685,749 690,751 695,755 700,745 706,742
711,738 715,745 720,748 725,755 730,766 735,769 740,765 744,763 749,776 754,787 758,774 763,763 768,757 773,765 778,758 783,747 787,736 793,736
798,738 808,739 812,748 820,753 827,759 832,767 837,775 842,777 846,788 851,793 857,804 861,803 866,794 871,777 876,769 881,778 886,781 891,776
895,760 900,753 904,745 914,746 919,755 925,767 930,783 935,795 939,800 944,793 949,791 954,787 959,793 963,796 969,797 973,783 978,762 983,748
988,738 993,734 998,733 1003,738 1008,743 1013,753 1018,765 1022,775 1027,779 1032,770 1037,761 1042,759 1049,768 1055,771 1061,778 1065,783
1070,778 1076,775 1081,766 1085,773 1090,767 1095,760 1100,753 1105,759 1110,778 1115,798 1119,807 1124,807 1129,798 1134,789 1138,776 1143,772
1148,780 1153,784 1158,786 1163,785 1167,783 1173,783 1178,775 1183,767 1188,757 1193,748 1196,743 1202,742 1207,752 1212,764 1217,776 1222,783
1227,791 1232,794 1236,800 1241,802 1246,799 1251,791 1256,779 1261,766 1266,756`);

// === HELPERS ===
const BORDER = '#6f8995';
const AXIS = 52;
let right, k;
const X = x => 4 + (x - 4) * k;
const snap = x => Math.floor(X(x)) + 0.5;
const line = (x1, y1, x2, y2, stroke, extra = '') =>
    `<line x1="${x1}" y1="${y1}" x2="${x2}" y2="${y2}" stroke="${stroke}" ${extra}/>`;
const rect = (x, y, w, h, fill, extra = '') =>
    `<rect x="${x}" y="${y}" width="${w}" height="${h}" fill="${fill}" ${extra}/>`;
const text = (x, y, s, extra = '') => `<text x="${x}" y="${y}" ${extra}>${s}</text>`;
const poly = (pts, extra) => `<polyline points="${pts.map(p => X(p[0]) + ',' + p[1]).join(' ')}" ${extra}/>`;
const gradient = (id, y1, y2, a, b) =>
    `<linearGradient id="${id}" gradientUnits="userSpaceOnUse" x1="0" y1="${y1}" x2="0" y2="${y2}"><stop stop-color="${a}"/><stop offset="1" stop-color="${b}"/></linearGradient>`;

function draw(id, top, html) {
    document.getElementById(id).innerHTML = `<g transform="translate(-4 ${-top})">${html}</g>`;
}
function frame(top, bottom, fill) {
    return rect(4.5, top + 0.5, right - 4, bottom - top, fill, `stroke="${BORDER}" class="crisp"`);
}
function monthLines(top, bottom) {
    return months.map(([name, x]) =>
        line(snap(x), top + 1, snap(x), bottom, name === '2015' ? '#a3a8c8' : '#ccd3e5', 'class="crisp"')).join('');
}
function valueBox(y, value, color, fill, w) {
    return line(right, y + 0.5, right + 5, y + 0.5, color) +
        rect(right + 5.5, y - 7.5, w, 15, fill, `stroke="${BORDER}"`) +
        text(right + 7, y + 4, value, `fill="${color}"`);
}
// 0-100 scale of the indicator panels
function scale(rows) {
    return rows.map(([v, y], i) => {
        const bold = v % 100 === 0;
        const label = v === 100 ? y + 6 : v === 0 ? y + 2 : y + 4;
        return line(5, y + 0.5, right, y + 0.5, bold ? '#b4bdd4' : '#ccd5e8') +
            line(right, y + 0.5, right + 4, y + 0.5, BORDER) +
            (i < rows.length - 1 ? line(right, y + 8.5, right + 2, y + 8.5, BORDER) : '') +
            text(right + 7, label, v, bold ? 'class="bold"' : '');
    }).join('');
}

// === PRICE ===
function drawPrice() {
    let s = gradient('bgPrice', 57, 630, '#ffffff', '#e2eaff') +
        gradient('gold', 325, 341, '#ffe030', '#f0b400') + frame(57, 630, 'url(#bgPrice)');

    for (let p = 2150; p >= 1810; p -= 10) {
        const y = Math.floor(65 + 3250 * Math.log(2150 / p)) + 0.5;
        const big = p % 50 === 0;
        s += line(5, y, right, y, big ? '#bcc3d9' : '#d5dcea');
        if (p === 1980) continue; // last price sits here
        s += line(right, y, right + 5, y, BORDER);
        s += text(right + 7, y + 4, p.toLocaleString('en-US'), big ? 'class="bold"' : '');
    }
    s += monthLines(57, 630);

    let d = 'M5 88';
    profile.forEach(([y, x]) => { d += `V${y}H${X(x)}`; });
    s += `<path d="${d}H5Z" fill="#909090" class="crisp"/>`;

    average.forEach(([c, pts]) => {
        s += poly(pairs(pts), `fill="none" stroke="${c === 'g' ? '#109a40' : '#ff1010'}" stroke-dasharray="4 3"`);
    });

    candles.forEach(({ up, v: [a, b, hi, lo] }, i) => {
        const cx = snap(8 + Math.ceil(i * 4.8679));
        const edge = up ? '#0f8f17' : '#9c1c20';
        s += rect(cx - 0.5, hi, 1, lo - hi + 1, edge);
        s += b - a < 2
            ? rect(cx - 2.5, a, 5, b - a + 1, edge)
            : rect(cx - 2, a + 0.5, 4, b - a, up ? '#58dc58' : '#e46a6c', `stroke="${edge}"`);
    });

    levels.forEach(([p, y, solid]) => {
        s += solid
            ? line(5, y, right, y, '#00f', 'stroke-width="2"')
            : line(5, y + 0.5, right, y + 0.5, '#0000e0', 'stroke-dasharray="20 8"');
        s += text(right - 3, y - 2, p.toLocaleString('en-US'), 'text-anchor="end"');
    });
    s += line(X(73), 605, right, 504, '#008000', 'stroke-width="2" stroke-dasharray="13 13"');

    arrows.forEach(([x1, y1, x2, y2, c]) => {
        const len = Math.hypot(X(x2) - X(x1), y2 - y1);
        const ux = (X(x2) - X(x1)) / len, uy = (y2 - y1) / len;
        const bx = X(x2) - ux * 8, by = y2 - uy * 8;
        s += line(X(x1), y1, bx, by, c, 'stroke-width="2"');
        s += `<polygon points="${X(x2)},${y2} ${bx - uy * 5},${by + ux * 5} ${bx + uy * 5},${by - ux * 5}" fill="${c}"/>`;
    });
    s += valueBox(333, '1,979.92', '#000', 'url(#gold)', 45);
    draw('price', 57, s);
}

// === RSI ===
function drawRsi() {
    let s = gradient('bgRsi', 633, 723, '#e3ebff', '#dfe7ff') + gradient('low', 695, 706, '#a8d8b8', '#409050') +
        frame(633, 723, 'url(#bgRsi)');
    s += scale([[100, 638], [80, 654], [60, 670], [40, 687], [20, 703], [0, 719]]);
    s += monthLines(633, 723);
    s += line(5, 662.5, right, 662.5, '#3030d8') + line(5, 695.5, right, 695.5, '#3030d8');
    s += poly(rsi.map(([x, y]) => [x, Math.max(y, 695.5)]), 'fill="url(#low)"');
    for (let i = 1; i < rsi.length; i++) {
        s += poly([rsi[i - 1], rsi[i]], `stroke="${rsi[i][1] <= rsi[i - 1][1] ? '#087010' : '#d00808'}" stroke-width="1.300"`);
    }
    s += valueBox(675, '53.956', '#d00000', '#e8eefa', 36);
    draw('rsi', 633, s);
}

// === STOCHASTIC ===
function valueAt(pts, x) {
    for (let i = 1; i < pts.length; i++) {
        if (x <= pts[i][0]) {
            const [x0, y0] = pts[i - 1], [x1, y1] = pts[i];
            return y0 + (y1 - y0) * (x - x0) / (x1 - x0);
        }
    }
    return pts[pts.length - 1][1];
}
function drawStoch() {
    const K = [], D = [];
    for (let i = -1; i < candles.length; i++) {
        const x = Math.max(5, 8.5 + i * 4.87);
        K.push([x, valueAt(stochK, x)]);
        let sum = 0;
        for (let n = 0; n < 5; n++) sum += valueAt(stochK, x - n * 4.87);
        D.push([x, sum / 5]);
    }
    let s = gradient('bgSt', 726, 814, '#e0e9ff', '#dbe5ff') + gradient('up', 732, 805, '#4c4cb0', '#b0b8ee') +
        gradient('down', 732, 805, '#e6d0de', '#dc8790') + frame(726, 814, 'url(#bgSt)');
    s += scale([[100, 731], [80, 747], [60, 763], [40, 778], [20, 794], [0, 810]]);
    s += monthLines(726, 814);

    // shade between %K and %D, split where they cross
    for (let i = 1; i < K.length; i++) {
        const a = D[i - 1][1] - K[i - 1][1], b = D[i][1] - K[i][1];
        const fill = v => `fill="url(#${v > 0 ? 'up' : 'down'})"`;
        if (a * b < 0) {
            const t = a / (a - b);
            const c = [K[i - 1][0] + t * (K[i][0] - K[i - 1][0]), K[i - 1][1] + t * (K[i][1] - K[i - 1][1])];
            s += poly([K[i - 1], c, D[i - 1]], fill(a)) + poly([K[i], c, D[i]], fill(b));
        } else {
            s += poly([K[i - 1], K[i], D[i], D[i - 1]], fill(a + b) + ' class="crisp"');
        }
    }
    s += poly(D, 'fill="none" stroke="#e86868" stroke-dasharray="5 3"');
    s += line(5, 747.5, right, 747.5, '#3030d8') + line(5, 794.5, right, 794.5, '#3030d8');
    s += poly(K, 'fill="none" stroke="#000" stroke-width="1.200"');
    s += valueBox(756, '67.718', '#000', '#e8eefa', 36) + valueBox(778, '40.451', '#e06060', '#e8eefa', 36);
    draw('stoch', 726, s);
}

function drawDates() {
    draw('dates', 815, months.map(([name, x]) =>
        line(snap(x), 815, snap(x), 819, BORDER) +
        text(Math.round(X(x)), 831, name, `text-anchor="middle" ${name === '2015' ? 'class="bold"' : ''}`)).join(''));
}

function drawAll() {
    right = document.getElementById('price').clientWidth - AXIS;
    k = (right - 4) / 1376;
    drawPrice();
    drawRsi();
    drawStoch();
    drawDates();
}
window.addEventListener('resize', drawAll);
drawAll();
```
